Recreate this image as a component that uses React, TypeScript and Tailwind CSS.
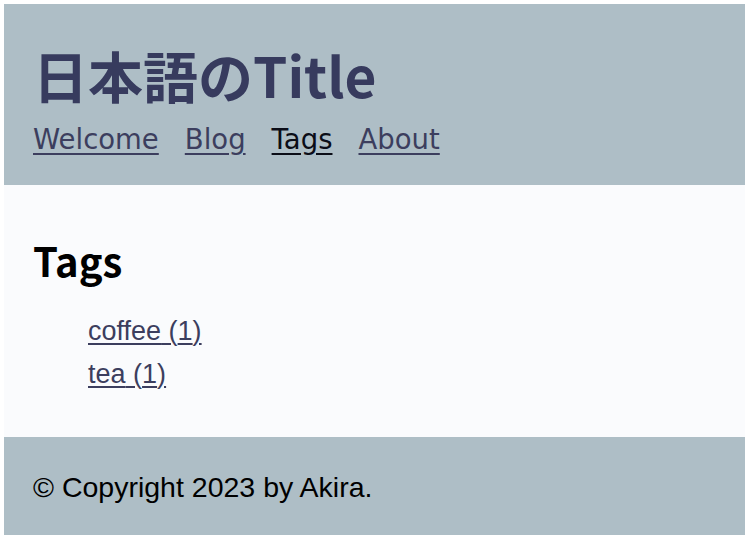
import React from "react";

const navItems = [
  { label: "Welcome", active: false },
  { label: "Blog", active: false },
  { label: "Tags", active: true },
  { label: "About", active: false },
];

const tags = [
  { name: "coffee", count: 1 },
  { name: "tea", count: 1 },
];

export default function App() {
  return (
    <div className="h-[540px] w-[749px] bg-white p-[4px]">
      {/* site header */}
      <header className="flex h-[181px] flex-col bg-[#aebec6] px-[29px] pt-[38px]">
        <h1 className="font-['Noto_Sans_CJK_JP',sans-serif] text-[55px] font-semibold leading-[64px] text-[#373b5e]">
          日本語のTitle
        </h1>
        <nav className="mt-[17px] flex gap-[26px] font-['DejaVu_Sans',sans-serif] text-[27.5px] leading-[32px]">
          {navItems.map((item) => (
            <a
              key={item.label}
              href="#"
              className={
                item.active
                  ? "text-[#0b0d17] underline underline-offset-[4px]"
                  : "text-[#3c3e5e] underline underline-offset-[4px]"
              }
            >
              {item.label}
            </a>
          ))}
        </nav>
      </header>

      {/* content */}
      <main className="h-[252px] bg-[#fafbfd] px-[29px] pt-[49px]">
        <h2 className="font-['Noto_Sans_CJK_JP',sans-serif] text-[40px] font-bold leading-[52px] text-black">
          Tags
        </h2>
        <ul className="mt-[24px] pl-[55px] font-['Liberation_Sans',sans-serif] text-[27px] leading-[43px]">
          {tags.map((t) => (
            <li key={t.name}>
              <a href="#" className="text-[#3c3e5e] underline underline-offset-[3px]">
                {t.name} ({t.count})
              </a>
            </li>
          ))}
        </ul>
      </main>

      {/* footer */}
      <footer className="h-[98px] bg-[#aebec6] px-[29px] pt-[34px] font-['Liberation_Sans',sans-serif] text-[28.5px] leading-[32px] text-black">
        © Copyright 2023 by Akira.
      </footer>
    </div>
  );
}
